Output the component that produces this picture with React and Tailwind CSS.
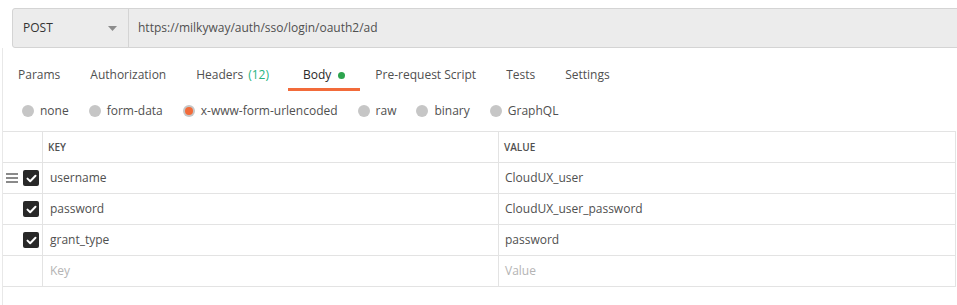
import React from "react";

const tabs = [
    { label: "Params" },
    { label: "Authorization" },
    { label: "Headers", count: "(12)" },
    { label: "Body", dot: true, active: true },
    { label: "Pre-request Script" },
    { label: "Tests" },
    { label: "Settings" },
];

const bodyTypes = [
    { label: "none" },
    { label: "form-data" },
    { label: "x-www-form-urlencoded", selected: true },
    { label: "raw" },
    { label: "binary" },
    { label: "GraphQL" },
];

const rows = [
    { key: "username", value: "CloudUX_user", handle: true },
    { key: "password", value: "CloudUX_user_password" },
    { key: "grant_type", value: "password" },
];

const Checkbox = () => (
    <div className="w-[16px] h-[16px] rounded-[2px] bg-[#282828] flex items-center justify-center">
        <svg width="11" height="9" viewBox="0 0 11 9" fill="none">
            <path d="M1.5 4.6 L4.2 7.2 L9.5 1.8" stroke="white" strokeWidth="2" strokeLinecap="round" strokeLinejoin="round" />
        </svg>
    </div>
);

const Handle = () => (
    <div className="flex flex-col gap-[2.4px] w-[12px]">
        <div className="h-[1.5px] bg-[#8a8a8a]"></div>
        <div className="h-[1.5px] bg-[#8a8a8a]"></div>
        <div className="h-[1.5px] bg-[#8a8a8a]"></div>
    </div>
);

export default function App() {
    return (
        <div className="w-[957px] h-[305px] bg-white overflow-hidden font-['Open_Sans',sans-serif] text-[12px] text-[#505050]">
            {/* url bar */}
            <div className="pt-[8px] pl-[12px]">
                <div className="flex h-[40px] w-[960px] bg-[#ececec] border border-[#d4d4d4] rounded-[3px]">
                    <div className="w-[116px] shrink-0 flex items-center justify-between pl-[10px] pr-[11px] border-r border-[#d4d4d4]">
                        <span className="text-[12px] text-[#333]">POST</span>
                        <svg width="9" height="5" viewBox="0 0 9 5">
                            <path d="M0 0 H9 L4.5 5 Z" fill="#8c8c8c" />
                        </svg>
                    </div>
                    <div className="flex items-center pl-[9px] text-[12px] text-[#505050]">
                        https://milkyway/auth/sso/login/oauth2/ad
                    </div>
                </div>
            </div>

            <div className="ml-[2px] border-l border-[#e8e8e8] h-full">
                {/* tabs */}
                <div className="flex h-[43px] pt-[18px]">
                    {tabs.map((t) => (
                        <div
                            key={t.label}
                            className={
                                t.active
                                    ? "pl-[15px] pr-[15px] h-[25px] flex items-start gap-[7px] border-b-[3px] border-[#f26b3a] text-[#282828]"
                                    : t.count
                                    ? "pl-[15px] pr-[19px] h-[25px] flex items-start gap-[5px] text-[#505050]"
                                    : "px-[15px] h-[25px] flex items-start text-[#505050]"
                            }
                        >
                            <span className="text-[12px] leading-[18px]">{t.label}</span>
                            {t.count && <span className="text-[12px] leading-[18px] text-[#26b47f]">{t.count}</span>}
                            {t.dot && <span className="mt-[6px] w-[7px] h-[7px] rounded-full bg-[#2da44e]"></span>}
                        </div>
                    ))}
                </div>

                {/* body types */}
                <div className="flex items-center h-[40px] pl-[19px] gap-[20px]">
                    {bodyTypes.map((b) => (
                        <div key={b.label} className="flex items-center gap-[6px]">
                            <span className="w-[12px] h-[12px] rounded-full bg-[#c6c6c6] flex items-center justify-center">
                                {b.selected && <span className="w-[8px] h-[8px] rounded-full bg-[#f26b3a]"></span>}
                            </span>
                            <span className="text-[12px] leading-[18px] text-[#505050]">{b.label}</span>
                        </div>
                    ))}
                </div>

                {/* table */}
                <div className="w-[953px] border-t border-r border-[#e3e3e3]">
                    <div className="flex h-[31px] border-b border-[#e3e3e3] text-[10px] font-semibold text-[#505050]">
                        <div className="w-[39px] shrink-0"></div>
                        <div className="w-[456px] shrink-0 border-l border-[#e3e3e3] flex items-center pl-[5px]">KEY</div>
                        <div className="flex-1 border-l border-[#e3e3e3] flex items-center pl-[5px]">VALUE</div>
                    </div>
                    {rows.map((r) => (
                        <div key={r.key} className="flex h-[31px] border-b border-[#e3e3e3] text-[12px]">
                            <div className="w-[39px] shrink-0 flex items-center justify-end pr-[3px] gap-[5px]">
                                {r.handle && <Handle />}
                                <Checkbox />
                            </div>
                            <div className="w-[456px] shrink-0 border-l border-[#e3e3e3] flex items-center pl-[7px]">{r.key}</div>
                            <div className="flex-1 border-l border-[#e3e3e3] flex items-center pl-[6px]">{r.value}</div>
                        </div>
                    ))}
                    <div className="flex h-[31px] border-b border-[#e3e3e3] text-[12px] text-[#b4b4b4]">
                        <div className="w-[39px] shrink-0"></div>
                        <div className="w-[456px] shrink-0 border-l border-[#e3e3e3] flex items-center pl-[7px]">Key</div>
                        <div className="flex-1 border-l border-[#e3e3e3] flex items-center pl-[6px]">Value</div>
                    </div>
                </div>
            </div>
        </div>
    );
}
